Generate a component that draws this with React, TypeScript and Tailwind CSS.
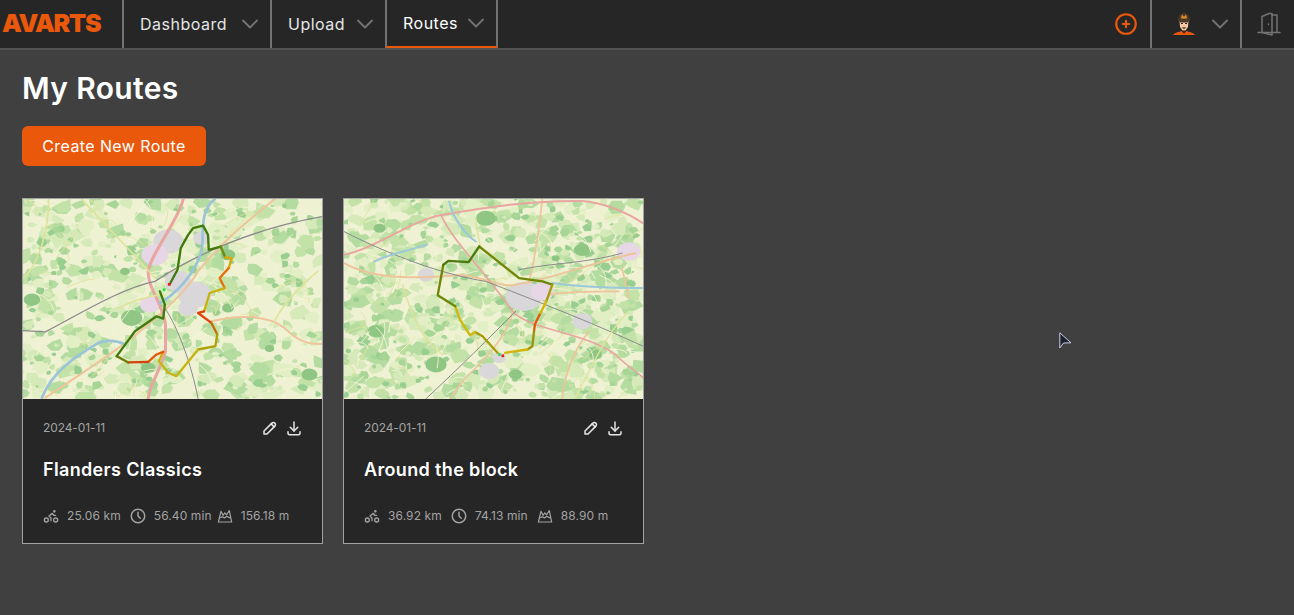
import { TbBike, TbChevronDown, TbCirclePlus, TbClock, TbDownload, TbPencil } from 'react-icons/tb';

type Seg = { color: string; pts: number[][] };
type Road = { color: string; w: number; d: string };

// tiny seeded generator so the map texture stays the same between runs
function makeRand(seed: number) {
    let s = seed;
    return () => {
        s = (s * 16807) % 2147483647;
        return (s - 1) / 2147483646;
    };
}

function blobs(seed: number, count: number, colors: string[], minR: number, maxR: number) {
    const rand = makeRand(seed);
    return Array.from({ length: count }, (_, i) => {
        const cx = rand() * 900;
        const cy = rand() * 600;
        const r = minR + rand() * (maxR - minR);
        const pts = Array.from({ length: 6 }, (_, k) => {
            const a = (k / 6) * Math.PI * 2;
            const rr = r * (0.5 + rand() * 0.7);
            return `${(cx + Math.cos(a) * rr * 1.3).toFixed(0)},${(cy + Math.sin(a) * rr).toFixed(0)}`;
        }).join(' ');
        return <polygon key={i} points={pts} fill={colors[i % colors.length]} />;
    });
}

// thin pale lanes between the fields
function lanes(seed: number, count: number) {
    const rand = makeRand(seed);
    return Array.from({ length: count }, (_, i) => {
        const x = rand() * 900;
        const y = rand() * 600;
        const dx = (rand() - 0.5) * 170;
        const dy = (rand() - 0.5) * 170;
        return <path key={i} d={`M${x} ${y} q${dx / 2 + 15} ${dy / 2 - 15} ${dx} ${dy}`} fill="none" stroke={i % 3 ? '#f7f5d8' : '#e2e29c'} strokeWidth="2.500" />;
    });
}

const firstRoute: Seg[] = [
    { color: '#3f7a0c', pts: [[445, 258], [468, 215], [478, 150], [500, 110], [515, 90], [545, 82], [560, 110], [562, 155], [598, 145]] },
    { color: '#6d8a08', pts: [[598, 145], [612, 178]] },
    { color: '#d8a80c', pts: [[612, 178], [632, 180], [622, 210]] },
    { color: '#e8700c', pts: [[622, 210], [595, 240], [610, 270]] },
    { color: '#c9b00f', pts: [[610, 270], [565, 285], [548, 340]] },
    { color: '#e0420c', pts: [[548, 340], [530, 345], [570, 375]] },
    { color: '#c96a0a', pts: [[570, 375], [588, 410]] },
    { color: '#b0a00c', pts: [[588, 410], [582, 445], [530, 455]] },
    { color: '#c9b40f', pts: [[530, 455], [465, 535], [440, 525], [412, 490], [425, 462]] },
    { color: '#df5a0c', pts: [[425, 462], [405, 470], [380, 492]] },
    { color: '#d8400c', pts: [[380, 492], [320, 494]] },
    { color: '#6b7d08', pts: [[320, 494], [285, 475]] },
    { color: '#3f7a0c', pts: [[285, 475], [340, 400], [405, 355], [425, 362], [430, 320], [415, 280]] },
];

const secondRoute: Seg[] = [
    { color: '#6f8606', pts: [[410, 145], [530, 240], [600, 250], [630, 260]] },
    { color: '#a79a08', pts: [[630, 260], [612, 310]] },
    { color: '#d9b40c', pts: [[612, 310], [592, 350]] },
    { color: '#e2580a', pts: [[592, 350], [578, 378], [575, 400]] },
    { color: '#9c9208', pts: [[575, 400], [570, 445], [555, 455]] },
    { color: '#d4b40c', pts: [[555, 455], [488, 465]] },
    { color: '#a89a08', pts: [[465, 465], [420, 415], [398, 402]] },
    { color: '#d0b80c', pts: [[398, 402], [382, 412], [352, 365], [338, 325]] },
    { color: '#6f8606', pts: [[338, 325], [285, 292], [302, 200]] },
    { color: '#4d7a08', pts: [[302, 200], [318, 188], [378, 192], [410, 145]] },
];

const firstRoads: Road[] = [
    { color: '#eec49a', w: 6, d: 'M760 3 C690 60 600 130 530 220 C500 270 450 320 380 380 C300 450 190 520 70 600' },
    { color: '#eec49a', w: 6, d: 'M570 370 C650 350 740 350 790 390 C830 430 860 440 903 438' },
    { color: '#e9a6a0', w: 9, d: 'M485 3 C475 60 385 170 380 220 C378 270 425 320 432 380 L432 460 C415 520 385 560 380 603' },
    { color: '#8a8a8a', w: 4, d: 'M3 398 L70 402 C170 350 300 270 400 250 C520 170 700 90 903 55' },
    { color: '#8a8a8a', w: 3, d: 'M430 330 C470 390 510 500 530 603' },
    { color: '#dfe39a', w: 5, d: 'M180 3 C250 80 340 170 400 240 M80 3 C80 100 50 200 3 240 M290 330 C330 310 380 295 420 290 M890 220 C820 280 780 330 760 370' },
    { color: '#9cc4d8', w: 8, d: 'M580 3 C530 40 550 120 540 160 C520 230 460 290 415 315 M60 600 C90 520 170 470 230 435 C260 425 290 430 310 440' },
];

const secondRoads: Road[] = [
    { color: '#eec49a', w: 6, d: 'M3 195 C100 250 250 240 360 230 C430 240 480 270 520 260 C640 240 760 190 880 165' },
    { color: '#eec49a', w: 5, d: 'M600 3 C590 90 580 180 560 250 M840 210 L860 300 M740 400 C700 450 670 510 660 603 M620 290 C680 280 760 280 830 280' },
    { color: '#eec49a', w: 5, d: 'M510 340 C500 400 440 470 400 510 C370 540 340 570 325 603' },
    { color: '#e9a6a0', w: 6, d: 'M3 170 C100 150 200 70 295 50 C420 30 560 5 720 8 C790 15 850 40 903 75' },
    { color: '#e9a6a0', w: 5, d: 'M295 50 C330 130 420 210 510 340 C570 400 720 400 820 470 C860 510 890 525 903 540' },
    { color: '#8a8a8a', w: 3, d: 'M3 100 C140 170 300 230 430 250 C560 300 740 370 903 445 M530 215 C620 195 740 195 840 165 M250 603 C350 510 440 420 520 340' },
    { color: '#9cc8da', w: 6, d: 'M630 255 C700 265 770 270 903 270 M95 190 C130 170 190 160 250 140 M320 10 C330 60 370 110 400 130' },
    { color: '#dfe39a', w: 4, d: 'M180 260 C200 340 240 430 300 470 M400 60 C400 100 420 150 410 150 M700 600 C760 480 800 400 860 340' },
];

function MapThumb({ seed, density, roads, route, start, end, town, forest }: { seed: number; density: number; roads: Road[]; route: Seg[]; start: number[]; end: number[]; town: number[][]; forest: number[][] }) {
    return (
        <div className="h-[200px] w-full overflow-hidden">
            <svg viewBox="3 3 900 600" className="block h-[200px] w-full blur-[0.6px]">
                <rect x="0" y="0" width="906" height="606" fill="#eef1d2" />
                {blobs(seed, density, ['#d5eab8', '#c3e2a8', '#e2eec4', '#b4dca0'], 6, 26)}
                {blobs(seed + 7, density / 4, ['#a6d596', '#98ce90'], 5, 15)}
                {forest.map(([x, y, r], i) => (
                    <ellipse key={i} cx={x} cy={y} rx={r} ry={r * 0.75} fill="#8fc684" />
                ))}
                {lanes(seed + 13, 110)}
                {town.map(([x, y, r], i) => (
                    <ellipse key={i} cx={x} cy={y} rx={r} ry={r * 0.8} fill={i % 3 === 1 ? '#e6d6e6' : '#d9d7d9'} />
                ))}
                {roads.map((r, i) => (
                    <path key={i} d={r.d} fill="none" stroke={r.color} strokeWidth={r.w} strokeLinecap="round" />
                ))}
                {route.map((s, i) => (
                    <polyline
                        key={i}
                        points={s.pts.map(p => p.join(',')).join(' ')}
                        fill="none"
                        stroke={s.color}
                        strokeWidth="7"
                        strokeLinecap="round"
                        strokeLinejoin="round"
                    />
                ))}
                <rect x={start[0] - 4} y={start[1] - 4} width="8" height="8" fill="#22e04a" />
                <rect x={end[0] - 4} y={end[1] - 4} width="8" height="8" fill="#f01818" />
            </svg>
        </div>
    );
}

function ClimbIcon() {
    return (
        <svg viewBox="0 0 24 24" className="h-4 w-4" fill="none" stroke="currentColor" strokeWidth="1.800" strokeLinejoin="round" strokeLinecap="round">
            <path d="M2 21 L22 21 L18.500 4 L14.500 10 L11.500 7.500 L9 11 L6 5 Z" />
            <path d="M4 15 L8 13 L11 15 L14.500 12.500 L20 15" />
        </svg>
    );
}

function RouteCard({ name, km, min, climb, climbGap, map }: { name: string; km: string; min: string; climb: string; climbGap: string; map: React.ReactNode }) {
    return (
        <div className="w-[301px] border border-[#a3a3a3] bg-[#262626]">
            {map}
            <div className="h-[144px] px-5">
                <div className="flex h-[56px] items-center justify-between pt-[1px]">
                    <span className="text-[12px] tracking-[-0.1px] text-[#a3a3a3]">2024-01-11</span>
                    <div className="mr-[-1px] flex items-center gap-[6px] text-[#e5e5e5]">
                        <TbPencil className="h-[18px] w-[18px]" />
                        <TbDownload className="h-[18px] w-[18px]" />
                    </div>
                </div>
                <h2 className="mt-[1px] h-[28px] text-[18px] leading-[28px] font-semibold tracking-[0.35px] text-white">{name}</h2>
                <div className="mt-[23px] flex items-center whitespace-nowrap text-[12px] tracking-[0.1px] text-[#a3a3a3]">
                    <TbBike className="h-4 w-4 shrink-0" />
                    <span className="ml-2">{km} km</span>
                    <TbClock className="ml-2 h-[18px] w-[18px] shrink-0" />
                    <span className="ml-[7px]">{min} min</span>
                    <span className={`shrink-0 ${climbGap}`}>
                        <ClimbIcon />
                    </span>
                    <span className="ml-2">{climb} m</span>
                </div>
            </div>
        </div>
    );
}

function NavItem({ label, active, className }: { label: string; active?: boolean; className: string }) {
    return (
        <div className={`flex h-[48px] items-center justify-between border-l-2 border-[#737373] pr-[6px] pl-[16px] text-[16px] tracking-[0.5px] ${className} ${active ? 'border-r-2 border-b-2 border-b-[#ea580c] pb-[1px] text-white' : 'text-[#e5e5e5]'}`}>
            <span>{label}</span>
            <TbChevronDown className="h-[28px] w-[28px] text-[#737373]" strokeWidth={1.6} />
        </div>
    );
}

function Avatar() {
    return (
        <svg viewBox="0 0 24 24" className="h-[24px] w-[24px]">
            <path d="M1 23 C3 20 8 20 9 19 L15 19 C16 20 21 20 23 23 Z" fill="#ea580c" />
            <path d="M9.500 19 L12 21.500 L14.500 19 Z" fill="#262626" />
            <path d="M7.500 8 L16.500 8 L16 15 L13.500 18.500 L10.500 18.500 L8 15 Z" fill="#f3c9a8" />
            <path d="M7.500 8.500 L16.500 8.500 L16 10.500 L8 10.500 Z" fill="#5b3a22" />
            <rect x="9" y="11" width="2" height="1" fill="#262626" />
            <rect x="13" y="11" width="2" height="1" fill="#262626" />
            <path d="M10 15 L14 15 L13 17 L11 17 Z" fill="#8a5a3a" />
            <path d="M6 9 C6 3 9 1 12 1 C15 1 18 3 18 9 Z" fill="#4a3a28" />
            <path d="M9 6.500 L10 2.500 L12 5 L14 2.500 L15 6.500 Z" fill="#e8912a" />
        </svg>
    );
}

function DoorIcon() {
    return (
        <svg viewBox="0 0 24 24" className="h-[24px] w-[24px]" fill="none" stroke="#737373" strokeWidth="1.500" strokeLinecap="round" strokeLinejoin="round">
            <path d="M1 20.500 L23 20.500" />
            <path d="M5 20.500 L5 4.500 L12 1.500 L15 1.500 L15 23 L5 20.500" />
            <path d="M15 3 L20 3 L20 20.500" />
            <path d="M11.500 12 L11.500 12.500" />
        </svg>
    );
}

export default function App() {
    return (
        <div className="relative h-[615px] w-[1294px] overflow-hidden bg-[#404040] font-['Inter',sans-serif]">
            <nav className="flex h-[50px] border-b-2 border-[#525252] bg-[#262626]">
                <div className="flex w-[122px] items-center pl-[2px]">
                    <span className="text-[25px] font-black tracking-[-1.2px] text-[#ea580c]">AVARTS</span>
                </div>
                <NavItem label="Dashboard" className="w-[148px]" />
                <NavItem label="Upload" className="w-[115px]" />
                <NavItem label="Routes" active className="w-[113px]" />
                <div className="flex flex-1 items-center justify-end">
                    <TbCirclePlus className="mr-[11px] h-[26px] w-[26px] text-[#ea580c]" />
                    <div className="flex h-full w-[90px] items-center border-l-2 border-[#737373] pl-[20px]">
                        <Avatar />
                        <TbChevronDown className="ml-[10px] h-[28px] w-[28px] text-[#737373]" strokeWidth={1.6} />
                    </div>
                    <div className="flex h-full w-[54px] items-center border-l-2 border-[#737373] pl-[15px]">
                        <DoorIcon />
                    </div>
                </div>
            </nav>

            <main className="px-[22px]">
                <h1 className="mt-[20px] h-[36px] text-[30px] leading-[36px] font-semibold tracking-[0.35px] text-white">My Routes</h1>
                <button className="mt-[20px] h-[40px] w-[184px] rounded-md bg-[#ea580c] text-[16px] tracking-[0.4px] text-white">Create New Route</button>
                <div className="mt-[32px] flex gap-5">
                    <RouteCard
                        name="Flanders Classics"
                        km="25.06"
                        min="56.40"
                        climb="156.18"
                        climbGap="ml-[5px]"
                        map={
                            <MapThumb
                                seed={4211}
                                density={520}
                                roads={firstRoads}
                                route={firstRoute}
                                start={[428, 275]}
                                end={[443, 259]}
                                town={[[440, 130, 45], [400, 170, 40], [520, 290, 50], [470, 250, 40], [385, 320, 30], [540, 120, 25], [500, 330, 30]]}
                                forest={[[30, 305, 25], [310, 220, 15], [330, 360, 32], [620, 170, 22], [380, 510, 22], [620, 330, 18], [745, 452, 14], [865, 530, 24]]}
                            />
                        }
                    />
                    <RouteCard
                        name="Around the block"
                        km="36.92"
                        min="74.13"
                        climb="88.90"
                        climbGap="ml-[9px]"
                        map={
                            <MapThumb
                                seed={9077}
                                density={760}
                                roads={secondRoads}
                                route={secondRoute}
                                start={[471, 470]}
                                end={[481, 474]}
                                town={[[545, 295, 55], [600, 280, 35], [720, 370, 30], [440, 520, 30], [860, 160, 35], [250, 230, 25], [470, 480, 20]]}
                                forest={[[280, 500, 32], [100, 400, 25], [760, 470, 20], [520, 530, 20], [430, 60, 30], [720, 155, 25], [110, 90, 18], [640, 180, 12]]}
                            />
                        }
                    />
                </div>
            </main>

            {/* mouse pointer that was caught in the picture */}
            <svg viewBox="0 0 16 18" className="absolute top-[332px] left-[1059px] h-[18px] w-[16px]">
                <path d="M0.800 0.800 L0.800 16 L4.500 11 L12 10.800 Z" fill="#1c2230" stroke="#c8cce0" strokeWidth="1" />
            </svg>
        </div>
    );
}
